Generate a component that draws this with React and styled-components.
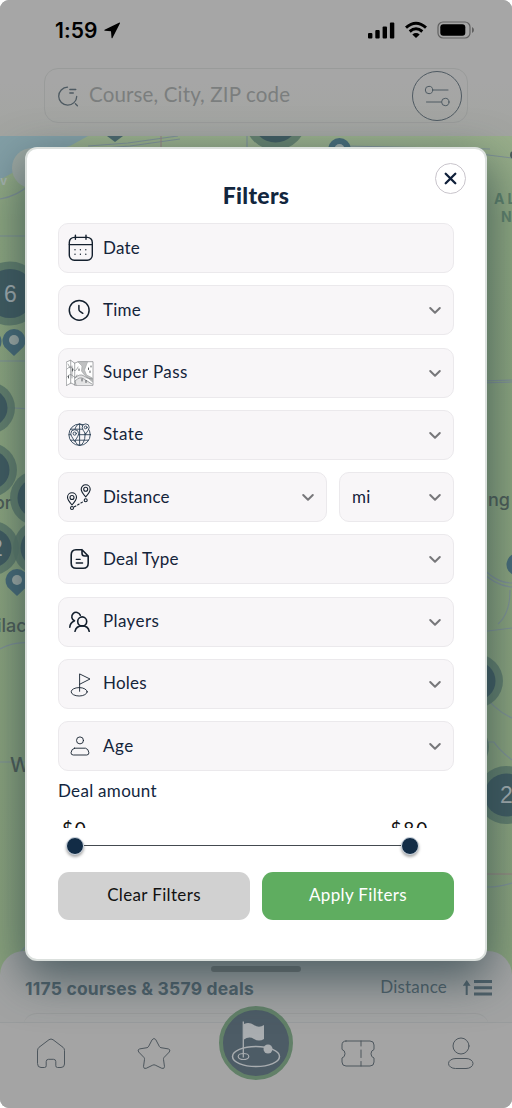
import React from 'react'
import styled, { createGlobalStyle } from 'styled-components'

const GlobalStyle = createGlobalStyle`
  * { box-sizing: border-box; }
  body {
    margin: 0;
    background: #fff;
    font-family: Lato, 'Liberation Sans', sans-serif;
  }
  button { font-family: inherit; }
`

const Screen = styled.div`
  position: relative;
  width: 512px;
  height: 1108px;
  overflow: hidden;
  border-radius: 9px;
  background: #a5a5a5;
  display: flex;
  flex-direction: column;
`

const Header = styled.header`
  height: 136px;
  flex: none;
  padding: 0 44px;
  background: linear-gradient(#a6a6a6 60%, #a3a5a1);
`

const StatusBar = styled.div`
  height: 68px;
  padding: 5px 0 13px 11px;
  display: flex;
  align-items: center;
  justify-content: space-between;
  margin-right: -6px;
`

const Clock = styled.div`
  display: flex;
  align-items: center;
  gap: 6px;
  font: 600 21px Inter, sans-serif;
  letter-spacing: 0.1px;
  color: #000;
`

const StatusIcons = styled.div`
  display: flex;
  align-items: center;
  gap: 9px;
  margin-right: -1px;
`

const SearchBar = styled.div`
  height: 55px;
  border: 1px solid #999b9a;
  border-radius: 14px;
  display: flex;
  align-items: center;
  padding: 0 5px 0 11px;
`

const Placeholder = styled.span`
  flex: 1;
  margin-left: 9px;
  padding-bottom: 3px;
  font-size: 20.5px;
  letter-spacing: 0.15px;
  color: #7b7e7e;
`

const RoundButton = styled.button`
  width: 50px;
  height: 50px;
  padding: 0;
  border: 1px solid #4f5a62;
  border-radius: 50%;
  background: none;
  display: flex;
  align-items: center;
  justify-content: center;
`

const MapArea = styled.div`
  height: 840px;
  flex: none;
  background: #8aa27c;
  svg { display: block; }
`

const Sheet = styled.section`
  position: relative;
  height: 71px;
  margin-top: -25px;
  flex: none;
  border-radius: 24px 24px 0 0;
  background: #a2a3a3;
  display: flex;
  flex-direction: column;
  align-items: center;
  overflow: hidden;
`

const Grabber = styled.div`
  width: 90px;
  height: 6px;
  flex: none;
  margin-top: 15px;
  border-radius: 3px;
  background: #737575;
`

const SheetRow = styled.div`
  width: 100%;
  height: 36px;
  flex: none;
  padding: 0 20px 2px 25px;
  display: flex;
  align-items: center;
  color: #4f6069;
`

const Count = styled.strong`
  flex: 1;
  padding-bottom: 1px;
  font: 700 17.5px Inter, sans-serif;
  letter-spacing: 0.2px;
`

const Sort = styled.span`
  font-size: 17px;
  letter-spacing: 0.2px;
  margin-right: 15px;
  padding-bottom: 6px;
`

const CardEdge = styled.div`
  width: 466px;
  height: 30px;
  flex: none;
  margin-top: 5px;
  border-top: 1px solid #999b9b;
  border-radius: 14px;
`

const Nav = styled.nav`
  height: 86px;
  flex: none;
  border-top: 1px solid #999c9d;
  background: #a4a4a4;
  display: grid;
  grid-template-columns: repeat(5, 102.4px);
  justify-items: center;
  padding-top: 13px;
`

const HomeCircle = styled.div`
  width: 74px;
  height: 74px;
  margin-top: -30px;
  border: 4px solid #628068;
  border-radius: 50%;
  background: #4d5c66;
  position: relative;
`

const Modal = styled.div`
  position: absolute;
  left: 25px;
  top: 147px;
  width: 462px;
  height: 814px;
  padding: 0 31px;
  border: 2px solid #dbe0dd;
  border-radius: 12px;
  background: #fff;
  box-shadow: 0 16px 46px 2px rgba(38, 62, 70, 0.68);
`

const Title = styled.h2`
  height: 74px;
  margin: 0;
  padding-top: 33px;
  text-align: center;
  font-size: 23px;
  line-height: 26px;
  letter-spacing: 0.3px;
  font-weight: 900;
  color: #12263e;
`

const Close = styled.button`
  position: absolute;
  top: 14px;
  right: 19px;
  width: 31px;
  height: 31px;
  padding: 0;
  border: 1px solid #c9c5cc;
  border-radius: 50%;
  background: #fff;
  display: flex;
  align-items: center;
  justify-content: center;
`

const Fields = styled.div`
  display: grid;
  gap: 12.25px;
`

const FieldRow = styled.div`
  display: flex;
  gap: 12px;
`

const FieldBox = styled.div`
  flex: ${p => (p.$width ? 'none' : 1)};
  width: ${p => (p.$width ? p.$width + 'px' : 'auto')};
  height: 50px;
  padding: 0 10px 0 ${p => (p.$plain ? 12 : 7)}px;
  border: 1px solid #ebe9ec;
  border-radius: 10px;
  background: #f8f6f8;
  display: flex;
  align-items: center;
`

const Label = styled.span`
  flex: 1;
  margin-left: ${p => (p.$plain ? 0 : 9)}px;
  padding-bottom: 2px;
  font-size: 17px;
  letter-spacing: ${p => p.$track || 0.2}px;
  color: #14243a;
`

const AmountTitle = styled.div`
  height: 41px;
  margin-top: 7.5px;
  font-size: 17px;
  line-height: 24px;
  letter-spacing: 0.3px;
  color: #12263e;
`

const Amounts = styled.div`
  height: 8px;
  overflow: hidden;
  display: flex;
  justify-content: space-between;
  padding: 0 25px 0 4px;
  font-size: 19px;
  line-height: 17px;
  letter-spacing: 1.8px;
  color: #111;
`

const Slider = styled.div`
  height: 18px;
  margin: 9px 35px 0 8px;
  display: flex;
  align-items: center;
`

const Thumb = styled.div`
  width: 18px;
  height: 18px;
  border: 1px solid #cfd8e2;
  border-radius: 50%;
  background: #122c46;
  box-shadow: 0 2px 3px rgba(0, 0, 0, 0.35);
`

const Track = styled.div`
  flex: 1;
  height: 1px;
  background: #444a50;
`

const Actions = styled.div`
  display: grid;
  grid-template-columns: 1fr 1fr;
  gap: 12px;
  margin-top: 17px;
`

const Action = styled.button`
  height: 48px;
  padding: 0 0 3px;
  border: 0;
  border-radius: 11px;
  background: ${p => (p.$primary ? '#5fad60' : '#d1d1d1')};
  color: ${p => (p.$primary ? '#fff' : '#111')};
  font-size: 17px;
  letter-spacing: 0.35px;
`

const Icon = styled.svg`
  flex: none;
  display: block;
  fill: none;
  stroke: ${p => p.$color || '#14202e'};
  stroke-width: ${p => p.$weight || 1.5};
  stroke-linecap: round;
  stroke-linejoin: round;
`

const FieldIcon = ({ weight, color, children }) => (
  <Icon width="28" height="28" viewBox="0 0 28 28" $weight={weight} $color={color}>{children}</Icon>
)

const icons = {
  date: (
    <FieldIcon weight={1.4}>
      <rect x="3.3" y="3.4" width="23" height="22.8" rx="5" />
      <path d="M3.3 10.6h23M9.4 1.2v4M20 1.2v4" />
      <path d="M9 15.8h.01M14.4 15.8h.01M19.8 15.8h.01M9 20.3h.01M14.4 20.3h.01M19.8 20.3h.01" />
    </FieldIcon>
  ),
  time: (
    <FieldIcon weight={1.5}>
      <circle cx="13.2" cy="14.3" r="9.9" />
      <path d="M12.9 9.6v3.6q0 1.4 1.1 2.2l2.8 1.9" />
    </FieldIcon>
  ),
  pass: (
    <FieldIcon weight={0.6} color="#6d7073">
      <path d="M.5 3l4-1.8 4.2 3 3.5-1.5H27v23.6H9.5L5 24l-4.3 2.4z" fill="#fff" />
      <path d="M12 3l4 4-.5 5 3 4 8 7v-4l-6-3-2-5 3-8z" fill="#bfc0c1" stroke="#a0a2a3" />
      <path d="M9 19q5-5 9-2t8 3M10 26l-1-4q5-5 9-2l8 5" fill="#e4e4e5" />
      <path d="M4.7 1.5V24M8.7 4v22M1 10q4-4 6 0t5-2M1 18q3-4 6-1t4-1M2 5l2 4M6 7v12" strokeDasharray="1.5 .7" />
      <path d="M2.5 17v2M6.5 10v2M22.5 9v1.5M25 7v1M24 12v1.5M16 20v2M20 21.5v2M13 10v1.5" stroke="#44484c" strokeWidth="0.9" />
    </FieldIcon>
  ),
  state: (
    <FieldIcon weight={0.9} color="#2c4257">
      <circle cx="13.6" cy="13.7" r="10.7" />
      <ellipse cx="13.6" cy="13.7" rx="5.5" ry="10.7" />
      <path d="M13.6 3v21.4M3 13.7h21.4M4.5 8.2h18M4.5 19.2h18" />
      <path d="M8.7 20Q4.8 15 4.8 12.6a3.9 3.9 0 0 1 7.8 0Q12.6 15 8.7 20z" fill="#f8f6f8" />
      <circle cx="8.7" cy="12.6" r="1.6" />
      <path d="M19.7 13Q16.2 8.6 16.2 6.4a3.5 3.5 0 0 1 7 0q0 2.2-3.5 6.6z" fill="#f8f6f8" />
      <circle cx="19.7" cy="6.4" r="1.4" />
    </FieldIcon>
  ),
  distance: (
    <FieldIcon weight={1.1}>
      <path d="M6 22Q1.5 17 1.5 14.3a4.5 4.5 0 0 1 9 0Q10.5 17 6 22zM19.7 13.8q-4.5-5-4.5-7.6a4.5 4.5 0 0 1 9 0q0 2.6-4.5 7.6z" />
      <circle cx="6" cy="14.5" r="2" />
      <circle cx="19.7" cy="6.3" r="2" />
      <circle cx="6" cy="25" r="1.5" />
      <circle cx="19.7" cy="17.3" r="1.5" />
      <path d="M8.3 23.8l9.4-5.4" strokeDasharray="1.8 2" />
    </FieldIcon>
  ),
  deal: (
    <FieldIcon weight={1.6}>
      <path d="M16 4.7h-6Q5.2 4.7 5.2 10v8.2q0 5 5 5h7q5 0 5-5V11L16 4.7v3.5q0 2.8 2.8 2.8h3.4" />
      <path d="M10.2 14.3h4M10.2 18h6.4" strokeWidth="1.3" />
    </FieldIcon>
  ),
  players: (
    <FieldIcon weight={1.6}>
      <circle cx="16.2" cy="13.4" r="4.5" />
      <path d="M9 23.3c.7-3.5 3-5.4 7.2-5.4s6.4 1.9 7 5.4M14.3 7.2a4.4 4.4 0 1 0-5.800 5.600M3.800 19.300c.2-3 1.600-5 4.300-6.200" />
    </FieldIcon>
  ),
  holes: (
    <FieldIcon weight={0.9}>
      <path d="M13.6 21.3V3.9L24 9l-10.4 5.3" />
      <ellipse cx="13.2" cy="21.8" rx="8" ry="4.2" />
    </FieldIcon>
  ),
  age: (
    <FieldIcon weight={0.9}>
      <circle cx="14" cy="8.4" r="3.5" />
      <path d="M8.5 16.2h11q3 .6 3.400 4.600 0 2.200-2.200 2.200H7.300Q5 23 5 20.800q.4-4 3.500-4.600z" />
    </FieldIcon>
  )
}

const Chevron = () => (
  <Icon width="16" height="16" viewBox="0 0 16 16" $color="#77777a" $weight={2}>
    <path d="M3.2 6L8 10.8 12.8 6" />
  </Icon>
)

const Field = ({ icon, label, width, arrow = true, track }) => (
  <FieldBox $width={width} $plain={!icon}>
    {icon && icons[icon]}
    <Label $plain={!icon} $track={track}>{label}</Label>
    {arrow && <Chevron />}
  </FieldBox>
)

const Cluster = ({ x, y, r, label, lx }) => (
  <g>
    <circle cx={x} cy={y} r={r} fill="#5a7869" fillOpacity="0.85" />
    <circle cx={x} cy={y} r={r - 7.5} fill="#3f5a60" />
    {label && <text x={lx} y={y + 8} fontFamily="Liberation Sans" fontSize="23" fill="#a4adb0">{label}</text>}
  </g>
)

const Pin = ({ x, y }) => (
  <g>
    <path d={`M${x} ${y + 16}L${x - 9.5} ${y + 7}a11.500 11.500 0 1 1 19 0z`} fill="#466a78" />
    <circle cx={x} cy={y} r="5" fill="#a1aca8" />
  </g>
)

// drawn in page coordinates, the viewBox starts below the header
const GolfMap = () => (
  <svg width="512" height="840" viewBox="0 136 512 840">
    <defs>
      <linearGradient id="land" x1="0" x2="0" y1="0" y2="1">
        <stop offset="0" stopColor="#99ae8b" />
        <stop offset="0.1" stopColor="#8ca57f" />
        <stop offset="1" stopColor="#89a17c" />
      </linearGradient>
    </defs>
    <rect y="136" width="512" height="840" fill="url(#land)" />
    <path d="M0 136h88L70 146l-20 5L0 180z" fill="#839fa6" />
    <g fill="none" stroke="#7f9096" strokeWidth="1.2">
      <path d="M0 199Q18 196 30 184M88 146l40-3 50-7M90 149l40-3 50-7M247 136v14M345 146l145 3M0 236h30M0 361h30M0 407l30 2M0 649q15-8 30-6M0 762h30M13 960l17-18M480 154l32 4" />
      <path d="M480 381l32-1M480 383l32-1M480 565q15 18 32 18M480 570q15 16 32 17M480 632l32-4M480 690q14 20 32 28M480 742h14q5 8 18 18M480 886q12 3 32-3M510 590q0 24-12 34" />
    </g>
    <path d="M161 136v12M480 874h32" stroke="#967f80" strokeWidth="1" />
    <circle cx="32" cy="168" r="20" fill="#9fa9a3" />
    <text x="0" y="185" fontFamily="Inter" fontSize="12" fontWeight="700" fill="#a7b4ae">v</text>
    <g fontFamily="Inter" fontSize="18" fontWeight="500" fill="#4d5b55">
      <text x="-6" y="509">or</text>
      <text x="-3" y="632">ilac</text>
      <text x="10" y="772" fontSize="20">W</text>
      <text x="488" y="506">ng</text>
    </g>
    <g fontFamily="Inter" fontSize="14" fontWeight="700" letterSpacing="3" fill="#5d7f69">
      <text x="494" y="204">AL</text>
      <text x="501" y="222">N</text>
    </g>
    <Cluster x={275.5} y={119} r={31} />
    <Pin x={339.5} y={149} />
    <path d="M107 136h16l-8 6z" fill="#4a666c" />
    <circle cx="514" cy="155" r="4" fill="#4a5b5b" />
    <Pin x={-10} y={341} />
    <Cluster x={10} y={293.5} r={32} label="6" lx={4} />
    <Pin x={14} y={340} />
    <Cluster x={-11} y={408} r={26} />
    <Cluster x={-10} y={470} r={27} />
    <Cluster x={-8} y={548} r={27} label="2" lx={-10} />
    <Cluster x={38} y={498} r={28} />
    <Cluster x={41} y={548} r={28} />
    <Pin x={17} y={580} />
    <Pin x={518} y={564} />
    <Cluster x={476} y={681} r={27} />
    <Cluster x={466} y={747} r={23} />
    <Cluster x={506} y={795} r={29} label="2" lx={500} />
  </svg>
)

const App = () => {
  return (
    <Screen>
      <GlobalStyle />
      <Header>
        <StatusBar>
          <Clock>
            1:59
            <svg width="16" height="17" viewBox="0 0 16 17"><path d="M15.5.6L.6 7.8q-.8.7.3 1L7 9.200l.5 6.500q.5 1 1.100 0L16 1.200q0-.8-.5-.6z" /></svg>
          </Clock>
          <StatusIcons>
            <svg width="27" height="17" viewBox="0 0 27 17">
              <rect x="0" y="11" width="4.4" height="5.5" rx="1" />
              <rect x="7.3" y="8" width="4.4" height="8.5" rx="1" />
              <rect x="14.6" y="4.5" width="4.4" height="12" rx="1" />
              <rect x="21.9" y="0.5" width="4.4" height="16" rx="1" />
            </svg>
            <svg width="24" height="18" viewBox="0 0 24 18">
              <path d="M2 6.6q10-8.6 20 0M5.7 10.5q6.3-5.4 12.6 0" fill="none" stroke="#000" strokeWidth="3" />
              <path d="M8.3 13.4q3.7-2.800 7.400 0L12 17z" />
            </svg>
            <svg width="38" height="18" viewBox="0 0 38 18">
              <rect x="1" y="1" width="32" height="16" rx="5" fill="none" stroke="#606060" strokeWidth="1.2" />
              <rect x="3.3" y="3.3" width="25" height="11.4" rx="3" />
              <path d="M35 6v6q2-1 2-3t-2-3z" fill="#606060" />
            </svg>
          </StatusIcons>
        </StatusBar>
        <SearchBar>
          <Icon width="24" height="24" viewBox="0 0 24 24" $color="#4e5a62" $weight={1.3}>
            <path d="M11.5 3.2a9 9 0 1 0 9.2 9.2M13.8 5.5h6M13.8 9h3.5M19.4 19.8l2 2" />
          </Icon>
          <Placeholder>Course, City, ZIP code</Placeholder>
          <RoundButton>
            <Icon width="26" height="22" viewBox="0 0 26 22" $color="#4e5a62" $weight={1}>
              <circle cx="5" cy="5" r="3.7" />
              <path d="M9 5h15M2.5 17H17" />
              <circle cx="21.3" cy="17" r="3.7" />
            </Icon>
          </RoundButton>
        </SearchBar>
      </Header>

      <MapArea><GolfMap /></MapArea>

      <Sheet>
        <Grabber />
        <SheetRow>
          <Count>1175 courses &amp; 3579 deals</Count>
          <Sort>Distance</Sort>
          <svg width="30" height="20" viewBox="0 0 30 20" fill="#4f6069">
            <path d="M4.7 1L.8 6.800h2.900V16h2V6.800h2.900zM12 1h18v3H12zM12 7.200h18v3H12zM12 13.400h18v3H12z" />
          </svg>
        </SheetRow>
        <CardEdge />
      </Sheet>

      <Nav>
        <Icon width="34" height="36" viewBox="0 0 34 36" $color="#4d565d" $weight={1}>
          <path d="M3.500 14.500Q3.500 12.500 5 11.300L15 3.700q2-1.400 4 0l10 7.600q1.500 1.200 1.500 3.200V28q0 3.500-3.500 3.500h-3.500q-1.700 0-1.700-1.700v-4.200q0-2.300-2.300-2.300h-5q-2.300 0-2.300 2.300v4.200q0 1.700-1.700 1.700H7q-3.500 0-3.500-3.500z" />
        </Icon>
        <Icon width="34" height="36" viewBox="0 0 34 36" $color="#4d565d" $weight={1}>
          <path d="M15.300 3.500q1.700-2.200 3.400 0l3.700 7q.5 1 1.600 1.200l7.300 1.200q2.800.7 1 3.100l-5.200 5.400q-.8.900-.6 2l1 7.300q-.2 2.500-2.700 1.600l-6.600-3.200q-1.200-.6-2.400 0l-6.600 3.200q-2.500.9-2.700-1.600l1-7.300q.2-1.100-.6-2L1.700 16q-1.800-2.400 1-3.100L10 11.700q1.100-.2 1.600-1.200z" />
        </Icon>
        <HomeCircle>
          <svg width="66" height="66" viewBox="0 0 66 66" fill="#a9adb0">
            <path d="M20.3 11.5v36" stroke="#a9adb0" strokeWidth="1.3" />
            <path d="M21 14q5-2.500 10 1t10 0v14q-5 3-10 0t-10 .5z" />
            <ellipse cx="33" cy="46.5" rx="23.5" ry="10" fill="none" stroke="#a9adb0" strokeWidth="1.5" />
            <ellipse cx="20.5" cy="46.5" rx="5.3" ry="3" fill="none" stroke="#a9adb0" strokeWidth="1.2" />
            <circle cx="45" cy="39" r="4.5" />
          </svg>
        </HomeCircle>
        <Icon width="34" height="36" viewBox="0 0 34 36" $color="#4d565d" $weight={1}>
          <path d="M5 5h24q4 0 4 4v4.500q-3 1-3 4.300t3 4.200v4q0 4-4 4H5q-4 0-4-4v-4q3-1 3-4.300T1 13.400V9q0-4 4-4z" />
          <path d="M20 5v5M20 14v7.500M20 25.500V30" />
        </Icon>
        <Icon width="34" height="36" viewBox="0 0 34 36" $color="#4d565d" $weight={1}>
          <circle cx="17" cy="10" r="8" />
          <rect x="4.5" y="22.5" width="24.5" height="10" rx="7" ry="5" />
        </Icon>
      </Nav>

      <Modal>
        <Close>
          <Icon width="13" height="13" viewBox="0 0 13 13" $color="#10203a" $weight={2.3}>
            <path d="M1.7 1.7l9.6 9.6M11.3 1.7l-9.6 9.6" />
          </Icon>
        </Close>
        <Title>Filters</Title>
        <Fields>
          <Field icon="date" label="Date" arrow={false} />
          <Field icon="time" label="Time" />
          <Field icon="pass" label="Super Pass" track={0.45} />
          <Field icon="state" label="State" track={0.5} />
          <FieldRow>
            <Field icon="distance" label="Distance" />
            <Field label="mi" width={115} />
          </FieldRow>
          <Field icon="deal" label="Deal Type" />
          <Field icon="players" label="Players" track={0.4} />
          <Field icon="holes" label="Holes" />
          <Field icon="age" label="Age" track={0.5} />
        </Fields>
        <AmountTitle>Deal amount</AmountTitle>
        <Amounts>
          <span>$0</span>
          <span>$80</span>
        </Amounts>
        <Slider>
          <Thumb />
          <Track />
          <Thumb />
        </Slider>
        <Actions>
          <Action>Clear Filters</Action>
          <Action $primary>Apply Filters</Action>
        </Actions>
      </Modal>
    </Screen>
  )
}

export default App
